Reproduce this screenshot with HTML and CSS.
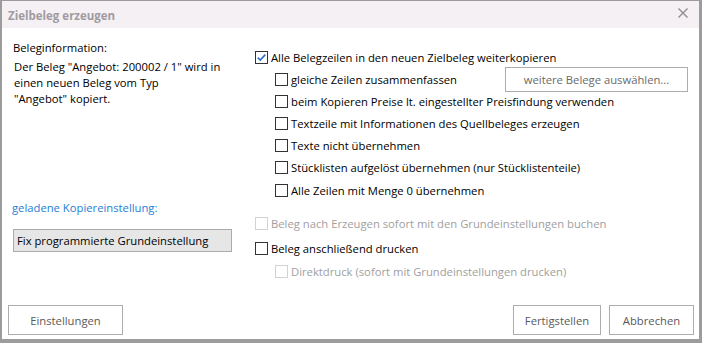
FILE: index.html
```html
<!DOCTYPE html>
<html lang="de">
<head>
<meta charset="utf-8">
<title>Zielbeleg erzeugen</title>
<link rel="stylesheet" href="styles.css">
</head>
<body>
<div class="window">
  <div class="titlebar">
    <span class="title">Zielbeleg erzeugen</span>
    <span class="close"><svg width="10" height="10" viewBox="0 0 10 10"><path d="M0.5 0.5 L9.5 9.5 M9.5 0.5 L0.5 9.5" stroke="#8e8e8e" stroke-width="1.4" fill="none"/></svg></span>
  </div>
  <div class="content">
    <div class="left">
      <div class="label">Beleginformation:</div>
      <div class="info">Der Beleg "Angebot: 200002 / 1" wird in<br>einen neuen Beleg vom Typ<br>"Angebot" kopiert.</div>
      <div class="link">geladene Kopiereinstellung:</div>
      <div class="setting">Fix programmierte Grundeinstellung</div>
    </div>
    <div class="right">
      <div class="row first"><span class="cb checked"><svg width="11" height="11" viewBox="0 0 11 11"><path d="M1.8 5.6 L4.3 8.1 L9.3 2.6" stroke="#2a6fc9" stroke-width="1.6" fill="none"/></svg></span><span>Alle Belegzeilen in den neuen Zielbeleg weiterkopieren</span></div>
      <div class="row sub split"><span class="opt"><span class="cb"></span><span>gleiche Zeilen zusammenfassen</span></span><span class="btn wide">weitere Belege auswählen...</span></div>
      <div class="row sub"><span class="cb"></span><span>beim Kopieren Preise lt. eingestellter Preisfindung verwenden</span></div>
      <div class="row sub"><span class="cb"></span><span>Textzeile mit Informationen des Quellbeleges erzeugen</span></div>
      <div class="row sub"><span class="cb"></span><span>Texte nicht übernehmen</span></div>
      <div class="row sub"><span class="cb"></span><span>Stücklisten aufgelöst übernehmen (nur Stücklistenteile)</span></div>
      <div class="row sub"><span class="cb"></span><span>Alle Zeilen mit Menge 0 übernehmen</span></div>
      <div class="row disabled book"><span class="cb"></span><span>Beleg nach Erzeugen sofort mit den Grundeinstellungen buchen</span></div>
      <div class="row print"><span class="cb"></span><span>Beleg anschließend drucken</span></div>
      <div class="row sub disabled direct"><span class="cb"></span><span>Direktdruck (sofort mit Grundeinstellungen drucken)</span></div>
    </div>
  </div>
  <div class="footer">
    <span class="btn settings">Einstellungen</span>
    <span class="spacer"></span>
    <span class="btn finish">Fertigstellen</span>
    <span class="btn cancel">Abbrechen</span>
  </div>
</div>
</body>
</html>
```

FILE: styles.css
```css
html, body {
  margin: 0;
  padding: 0;
  background: #ffffff;
}
body {
  font-family: "Open Sans", "Noto Sans", sans-serif;
  font-size: 11.25px;
  color: #000;
}
.window {
  width: 702px;
  height: 343px;
  box-sizing: border-box;
  border-style: solid;
  border-color: #9c9c9c;
  border-width: 1px 3px 4px 2px;
  display: flex;
  flex-direction: column;
  background: #fff;
}
.titlebar {
  height: 27px;
  background: #f4f0f4;
  display: flex;
  align-items: center;
  justify-content: space-between;
  padding: 0 11px 0 6px;
}
.title {
  font-weight: bold;
  font-size: 11.5px;
  color: #a19ba1;
  margin-top: 2px;
}
.close {
  display: flex;
  margin-top: -3px;
}
.content {
  flex: 1;
  display: flex;
  padding: 0 0 0 11px;
}
.left {
  width: 219px;
  display: flex;
  flex-direction: column;
  padding-top: 12px;
}
.label {
  line-height: 16px;
}
.info {
  line-height: 16px;
  margin-top: 3px;
  padding-left: 1px;
}
.link {
  line-height: 16px;
  color: #1f7ed6;
  margin-top: 93px;
  margin-left: -1px;
}
.setting {
  margin-top: 13px;
  height: 21px;
  border: 1px solid #ababab;
  background: #e6e6e6;
  display: flex;
  align-items: center;
  padding-left: 3px;
}
.right {
  margin-left: 23px;
  width: 433px;
  display: flex;
  flex-direction: column;
  padding-top: 19px;
}
.row {
  height: 22.2px;
  display: flex;
  align-items: center;
  white-space: nowrap;
}
.row.first {
  height: 21px;
}
.row.sub {
  padding-left: 20px;
}
.row.split {
  justify-content: space-between;
}
.opt {
  display: flex;
  align-items: center;
}
.cb {
  width: 11px;
  height: 11px;
  border: 1px solid #333;
  background: #fff;
  margin-right: 3px;
  flex: none;
  display: flex;
  align-items: center;
  justify-content: center;
}
.row.disabled {
  color: #a0a0a0;
}
.row.disabled .cb {
  border-color: #d3d3d3;
}
.row.book {
  margin-top: 10.8px;
}
.row.print {
  margin-top: 3px;
}
.row.direct {
  margin-top: 1px;
}
.btn {
  box-sizing: border-box;
  border: 1px solid #adadad;
  background: #fff;
  color: #5a5a5a;
  display: flex;
  align-items: center;
  justify-content: center;
}
.btn.wide {
  width: 183px;
  height: 25px;
  color: #6a6a6a;
}
.footer {
  height: 34px;
  display: flex;
  align-items: flex-start;
  padding: 0 5px 0 6px;
}
.spacer {
  flex: 1;
}
.footer .btn {
  height: 30px;
}
.btn.settings {
  width: 115px;
}
.btn.finish {
  width: 88px;
  margin-right: 8px;
}
.btn.cancel {
  width: 85px;
}
```
